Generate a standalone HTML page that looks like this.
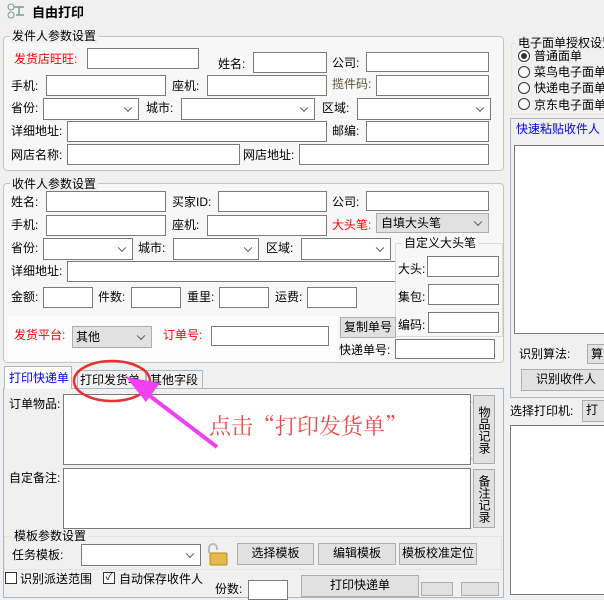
<!DOCTYPE html>
<html><head><meta charset="utf-8"><style>
*{box-sizing:border-box;margin:0;padding:0}
body{width:604px;height:590px;overflow:hidden;background:#f0f0f0;font-family:"Liberation Sans","Noto Sans CJK SC",sans-serif;font-size:12px;color:#000;position:relative}
.a{position:absolute;white-space:nowrap;line-height:14px}
.i{position:absolute;background:#fff;border:1px solid #7a7a7a}
.s{position:absolute;background:#fff;border:1px solid #7a7a7a}
.s:after{content:"";position:absolute;right:7px;top:50%;width:5px;height:5px;border-right:1px solid #555;border-bottom:1px solid #555;transform:translateY(-70%) rotate(45deg)}
.g{background:#e1e1e1;border:1px solid #adadad}
.b{position:absolute;background:#e1e1e1;border:1px solid #adadad;text-align:center;line-height:19px}
.r{color:#f00}
.gb{position:absolute;border:1px solid #c8c4bc;border-radius:4px}
.t{position:absolute;background:#f0f0f0;padding:0 2px;line-height:14px;white-space:nowrap}
.rad{position:absolute;width:12px;height:12px;border:1px solid #333;border-radius:50%;background:#fff}
.v{position:absolute;writing-mode:vertical-rl;background:#e1e1e1;border:1px solid #adadad;text-align:center;line-height:20px;font-size:12px}
.cb{position:absolute;width:12px;height:12px;border:1px solid #333;background:#fff}
</style></head><body>
<svg class="a" style="left:6px;top:3px" width="22" height="16" viewBox="0 0 22 16"><circle cx="5" cy="4" r="3" fill="none" stroke="#7a9a9a"/><circle cx="5" cy="12" r="3" fill="none" stroke="#7a9a9a"/><path d="M8 4h10M13 4v8M10 12h8" stroke="#7a9a9a" stroke-width="1.5"/></svg>
<div class="a" style="left:32px;top:6px;font-weight:bold;font-size:13px">自由打印</div>

<div class="gb" style="left:3px;top:36px;width:501px;height:135px;background:#f7f7f7"></div>
<div class="t" style="left:10px;top:29px;background:#f0f0f0">发件人参数设置</div>
<div class="a r" style="left:14px;top:52px">发货店旺旺:</div><div class="i" style="left:87px;top:48px;width:112px;height:21px"></div>
<div class="a" style="left:218px;top:57px">姓名:</div><div class="i" style="left:253px;top:52px;width:74px;height:21px"></div>
<div class="a" style="left:332px;top:56px">公司:</div><div class="i" style="left:366px;top:52px;width:123px;height:20px"></div>
<div class="a" style="left:11px;top:79px">手机:</div><div class="i" style="left:46px;top:75px;width:120px;height:21px"></div>
<div class="a" style="left:172px;top:79px">座机:</div><div class="i" style="left:207px;top:75px;width:120px;height:21px"></div>
<div class="a" style="left:332px;top:77px;color:#553">揽件码:</div><div class="i" style="left:376px;top:75px;width:113px;height:21px"></div>
<div class="a" style="left:11px;top:101px">省份:</div><div class="s" style="left:43px;top:98px;width:96px;height:22px"></div>
<div class="a" style="left:146px;top:101px">城市:</div><div class="s" style="left:181px;top:98px;width:134px;height:22px"></div>
<div class="a" style="left:322px;top:101px">区域:</div><div class="s" style="left:357px;top:98px;width:134px;height:22px"></div>
<div class="a" style="left:11px;top:124px">详细地址:</div><div class="i" style="left:67px;top:121px;width:260px;height:21px"></div>
<div class="a" style="left:332px;top:124px">邮编:</div><div class="i" style="left:366px;top:121px;width:123px;height:21px"></div>
<div class="a" style="left:11px;top:148px">网店名称:</div><div class="i" style="left:67px;top:144px;width:173px;height:21px"></div>
<div class="a" style="left:243px;top:148px">网店地址:</div><div class="i" style="left:299px;top:144px;width:190px;height:21px"></div>

<div class="gb" style="left:3px;top:183px;width:501px;height:180px;background:#f7f7f7"></div>
<div class="t" style="left:10px;top:177px">收件人参数设置</div>
<div class="a" style="left:11px;top:195px">姓名:</div><div class="i" style="left:46px;top:191px;width:120px;height:21px"></div>
<div class="a" style="left:172px;top:195px">买家ID:</div><div class="i" style="left:218px;top:191px;width:109px;height:21px"></div>
<div class="a" style="left:332px;top:195px">公司:</div><div class="i" style="left:366px;top:191px;width:123px;height:20px"></div>
<div class="a" style="left:11px;top:218px">手机:</div><div class="i" style="left:46px;top:215px;width:120px;height:21px"></div>
<div class="a" style="left:172px;top:218px">座机:</div><div class="i" style="left:207px;top:215px;width:120px;height:21px"></div>
<div class="a r" style="left:332px;top:218px">大头笔:</div><div class="s g" style="left:376px;top:213px;width:113px;height:20px;padding-left:4px;line-height:18px">自填大头笔</div>
<div class="a" style="left:11px;top:241px">省份:</div><div class="s" style="left:43px;top:238px;width:90px;height:22px"></div>
<div class="a" style="left:138px;top:241px">城市:</div><div class="s" style="left:173px;top:238px;width:86px;height:22px"></div>
<div class="a" style="left:266px;top:241px">区域:</div><div class="s" style="left:301px;top:238px;width:90px;height:22px"></div>
<div class="a" style="left:11px;top:264px">详细地址:</div><div class="i" style="left:67px;top:261px;width:330px;height:21px"></div>
<div class="a" style="left:11px;top:290px">金额:</div><div class="i" style="left:43px;top:287px;width:50px;height:21px"></div>
<div class="a" style="left:98px;top:290px">件数:</div><div class="i" style="left:131px;top:287px;width:50px;height:21px"></div>
<div class="a" style="left:187px;top:290px">重里:</div><div class="i" style="left:219px;top:287px;width:50px;height:21px"></div>
<div class="a" style="left:275px;top:290px">运费:</div><div class="i" style="left:307px;top:287px;width:50px;height:21px"></div>
<div class="a" style="left:8px;top:316px;width:330px;height:45px;background:#fcfcfc"></div>
<div class="a r" style="left:14px;top:328px">发货平台:</div><div class="s g" style="left:72px;top:326px;width:80px;height:22px;padding-left:3px;line-height:20px">其他</div>
<div class="a r" style="left:163px;top:328px">订单号:</div><div class="i" style="left:211px;top:326px;width:118px;height:20px"></div>
<div class="gb" style="left:395px;top:243px;width:108px;height:94px;border-color:#dcdcd0;border-radius:0;background:#f7f7f7"></div>
<div class="t" style="left:402px;top:236px;background:#f7f7f7">自定义大头笔</div>
<div class="a" style="left:398px;top:262px">大头:</div><div class="i" style="left:427px;top:256px;width:72px;height:21px"></div>
<div class="a" style="left:398px;top:290px">集包:</div><div class="i" style="left:428px;top:284px;width:71px;height:21px"></div>
<div class="a" style="left:398px;top:318px">编码:</div><div class="i" style="left:428px;top:312px;width:71px;height:21px"></div>
<div class="b" style="left:340px;top:317px;width:56px;height:21px">复制单号</div>
<div class="a" style="left:339px;top:343px">快递单号:</div><div class="i" style="left:395px;top:339px;width:100px;height:20px"></div>

<div class="a" style="left:3px;top:388px;width:501px;height:210px;border:1px solid #a9b8c8;background:#f0f0f0"></div>
<div class="a" style="left:4px;top:366px;width:68px;height:23px;background:#fcfcfc;border:1px solid #a9b8c8;border-bottom:none"></div>
<div class="a" style="left:9px;top:371px;color:#00f">打印快递单</div>
<div class="a" style="left:77px;top:370px;width:69px;height:19px;border:1px solid #a9b8c8;border-bottom:none"></div>
<div class="a" style="left:80px;top:373px">打印发货单</div>
<div class="a" style="left:146px;top:370px;width:57px;height:19px;border:1px solid #a9b8c8;border-bottom:none"></div>
<div class="a" style="left:150px;top:373px">其他字段</div>
<div class="a" style="left:9px;top:397px">订单物品:</div><div class="i" style="left:63px;top:394px;width:408px;height:71px"></div>
<div class="a" style="left:470px;top:398px;color:#d8ccb8;font-size:9px">^</div><div class="a" style="left:470px;top:450px;color:#d8ccb8;font-size:9px">v</div>
<div class="v" style="left:473px;top:395px;width:22px;height:69px">物品记录</div>
<div class="a" style="left:9px;top:471px">自定备注:</div><div class="i" style="left:63px;top:468px;width:408px;height:61px"></div>
<div class="v" style="left:473px;top:469px;width:22px;height:59px">备注记录</div>
<div class="gb" style="left:4px;top:536px;width:498px;height:34px;border-color:#e8e4d0;border-radius:0"></div>
<div class="t" style="left:12px;top:529px">模板参数设置</div>
<div class="a" style="left:12px;top:548px">任务模板:</div><div class="s" style="left:81px;top:544px;width:120px;height:22px"></div>
<svg class="a" style="left:205px;top:542px" width="24" height="24" viewBox="0 0 24 24"><path d="M4 11V6a4 4 0 0 1 8 0v2" fill="none" stroke="#bbb" stroke-width="2"/><rect x="5" y="11" width="17" height="12" rx="1" fill="#e8b84a" stroke="#b88a20"/></svg>
<div class="b" style="left:237px;top:543px;width:77px;height:22px">选择模板</div>
<div class="b" style="left:318px;top:543px;width:78px;height:22px">编辑模板</div>
<div class="b" style="left:399px;top:543px;width:78px;height:22px">模板校准定位</div>
<div class="cb" style="left:5px;top:572px"></div><div class="a" style="left:20px;top:572px">识别派送范围</div>
<div class="cb" style="left:103px;top:572px;font-size:10px;line-height:10px;text-align:center">✓</div><div class="a" style="left:119px;top:572px">自动保存收件人</div>
<div class="a" style="left:215px;top:582px">份数:</div><div class="i" style="left:248px;top:580px;width:40px;height:20px"></div>
<div class="b" style="left:301px;top:575px;width:118px;height:22px">打印快递单</div>
<div class="b" style="left:421px;top:582px;width:32px;height:14px"></div>
<div class="b" style="left:461px;top:582px;width:38px;height:14px"></div>

<div class="gb" style="left:511px;top:43px;width:100px;height:72px;border-color:#e8e4d0;border-radius:0"></div>
<div class="t" style="left:516px;top:36px">电子面单授权设置</div>
<div class="rad" style="left:518px;top:50px"></div><div class="a" style="left:521px;top:53px;width:6px;height:6px;border-radius:50%;background:#333"></div>
<div class="a" style="left:534px;top:49px">普通面单</div>
<div class="rad" style="left:518px;top:66px"></div><div class="a" style="left:534px;top:65px">菜鸟电子面单</div>
<div class="rad" style="left:518px;top:82px"></div><div class="a" style="left:534px;top:81px">快递电子面单</div>
<div class="rad" style="left:518px;top:98px"></div><div class="a" style="left:534px;top:98px">京东电子面单</div>
<div class="a" style="left:510px;top:118px;width:100px;height:280px;border:1px solid #a9b8c8"></div>
<div class="a" style="left:516px;top:122px;color:#00f">快速粘贴收件人</div>
<div class="i" style="left:514px;top:145px;width:100px;height:189px"></div>
<div class="a" style="left:519px;top:347px">识别算法:</div><div class="b" style="left:587px;top:344px;width:30px;height:20px;text-align:left;padding-left:3px">算</div>
<div class="b" style="left:521px;top:369px;width:90px;height:22px">识别收件人</div>
<div class="a" style="left:510px;top:404px">选择打印机:</div><div class="b" style="left:582px;top:400px;width:30px;height:22px;text-align:left;padding-left:3px">打</div>
<div class="i" style="left:510px;top:425px;width:100px;height:170px"></div>

<svg style="position:absolute;left:0;top:0" width="604" height="590"><ellipse cx="112" cy="381" rx="38" ry="20" fill="none" stroke="#e83030" stroke-width="2.5"/><path d="M217 447 L150 396" stroke="#f040f0" stroke-width="4"/><path d="M126 377 L160 383 L146 402 Z" fill="#f040f0"/></svg>
<div class="a" style="left:209px;top:413px;font-size:22px;line-height:26px;color:#f04848;font-family:'Noto Serif CJK SC',serif">点击“打印发货单”</div>
</body></html>
